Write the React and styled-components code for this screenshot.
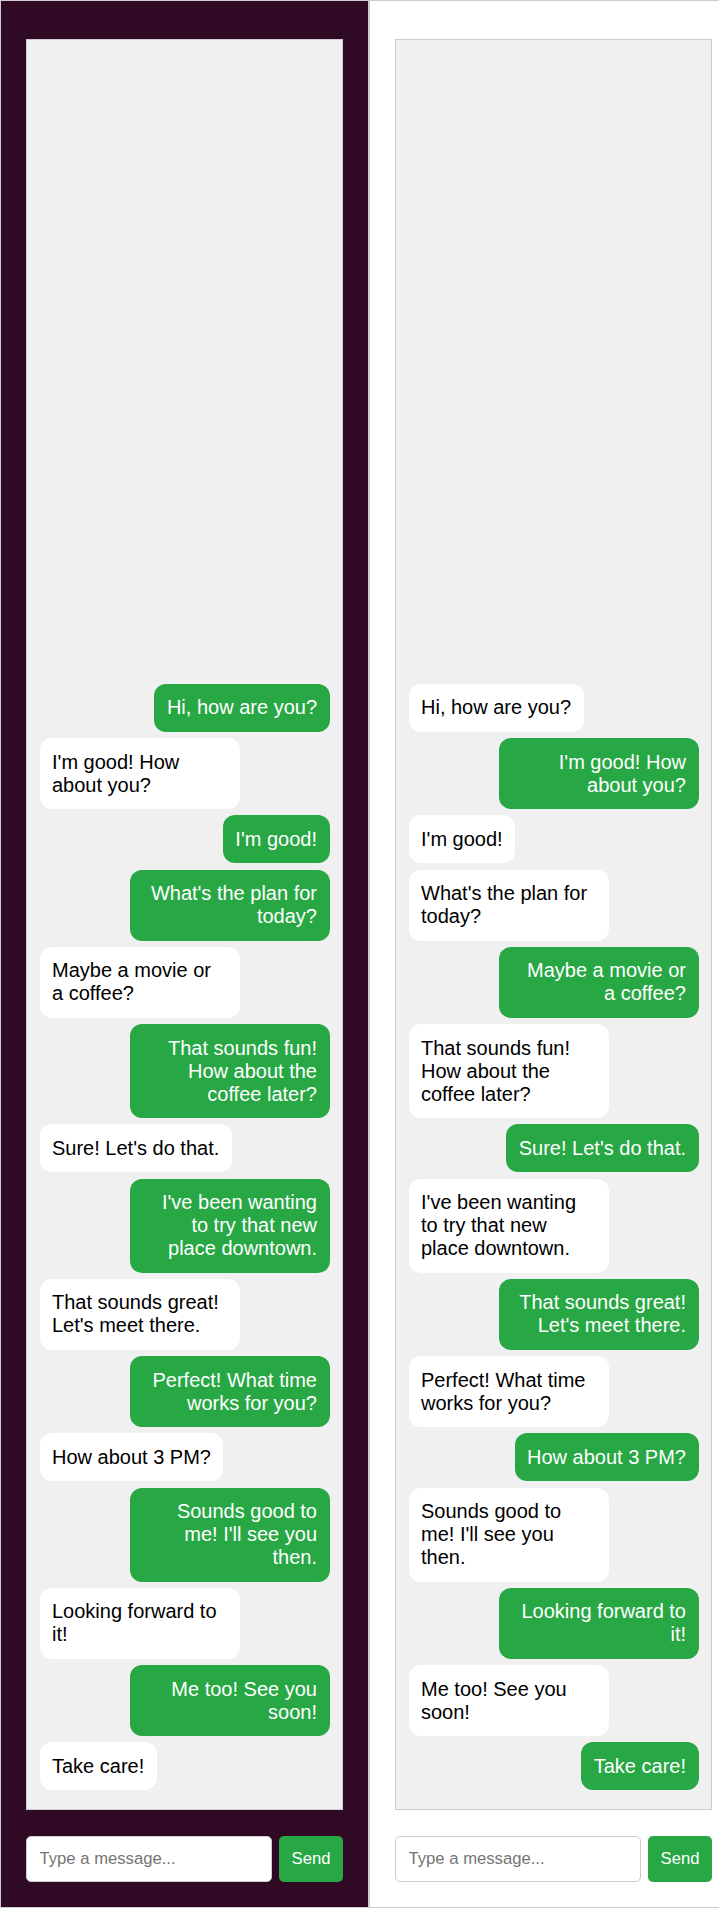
import React from 'react'
import styled, { createGlobalStyle } from 'styled-components'

const messages = [
  { text: 'Hi, how are you?', from: 'a' },
  { text: "I'm good! How about you?", from: 'b' },
  { text: "I'm good!", from: 'a' },
  { text: "What's the plan for today?", from: 'a' },
  { text: 'Maybe a movie or a coffee?', from: 'b' },
  { text: 'That sounds fun! How about the coffee later?', from: 'a' },
  { text: "Sure! Let's do that.", from: 'b' },
  { text: "I've been wanting to try that new place downtown.", from: 'a' },
  { text: "That sounds great! Let's meet there.", from: 'b' },
  { text: 'Perfect! What time works for you?', from: 'a' },
  { text: 'How about 3 PM?', from: 'b' },
  { text: "Sounds good to me! I'll see you then.", from: 'a' },
  { text: 'Looking forward to it!', from: 'b' },
  { text: 'Me too! See you soon!', from: 'a' },
  { text: 'Take care!', from: 'b' },
]

export default function App() {
  return (
    <>
      <GlobalStyle />
      <Page>
        <ChatWindow me='a' dark />
        <ChatWindow me='b' />
      </Page>
    </>
  )
}

function ChatWindow({ me, dark }) {
  return (
    <Panel dark={dark}>
      <MessageList>
        {messages.map((m, i) => (
          <Bubble key={i} mine={m.from === me}>
            {m.text}
          </Bubble>
        ))}
      </MessageList>
      <InputRow>
        <MessageInput placeholder='Type a message...' />
        <SendButton>Send</SendButton>
      </InputRow>
    </Panel>
  )
}

const GlobalStyle = createGlobalStyle`
  html, body {
    margin: 0;
    padding: 0;
    overflow: hidden;
  }
  body {
    font-family: "Liberation Sans", Arial, sans-serif;
  }
`

const Page = styled.div`
  display: flex;
  width: max-content;
  height: 100vh;
`

const Panel = styled.div.withConfig({
  shouldForwardProp: (prop) => prop !== 'dark',
})`
  display: flex;
  flex-direction: column;
  flex-shrink: 0;
  width: 369px;
  height: 100%;
  box-sizing: border-box;
  padding: 38px 25px 25px;
  border: 1px solid #ccc;
  background: ${(props) => (props.dark ? '#300a24' : '#fff')};
`

const MessageList = styled.div`
  flex: 1;
  min-height: 0;
  display: flex;
  flex-direction: column;
  justify-content: flex-end;
  overflow: hidden;
  padding: 12.5px;
  background: #f0f0f0;
  border: 1px solid #ccc;
`

const Bubble = styled.div.withConfig({
  shouldForwardProp: (prop) => prop !== 'mine',
})`
  box-sizing: border-box;
  max-width: 200px;
  padding: 12.5px;
  margin-bottom: 6.25px;
  border-radius: 12px;
  font-size: 20px;
  line-height: 23px;
  align-self: ${(props) => (props.mine ? 'flex-end' : 'flex-start')};
  text-align: ${(props) => (props.mine ? 'right' : 'left')};
  background: ${(props) => (props.mine ? '#28a745' : '#fff')};
  color: ${(props) => (props.mine ? '#fff' : '#000')};
`

const InputRow = styled.div`
  display: flex;
  gap: 7px;
  height: 46px;
  margin-top: 26px;
`

const MessageInput = styled.input`
  flex: 1;
  min-width: 0;
  box-sizing: border-box;
  padding: 0 12.5px;
  border: 1px solid #ccc;
  border-radius: 5px;
  background: #fff;
  font-family: "Liberation Sans", Arial, sans-serif;
  font-size: 16.67px;
  outline: none;

  &::placeholder {
    color: #757575;
  }
`

const SendButton = styled.button`
  box-sizing: border-box;
  width: 64px;
  padding: 0;
  border: none;
  border-radius: 5px;
  background: #28a745;
  color: #fff;
  font-family: "Liberation Sans", Arial, sans-serif;
  font-size: 16.67px;
  cursor: pointer;
`
